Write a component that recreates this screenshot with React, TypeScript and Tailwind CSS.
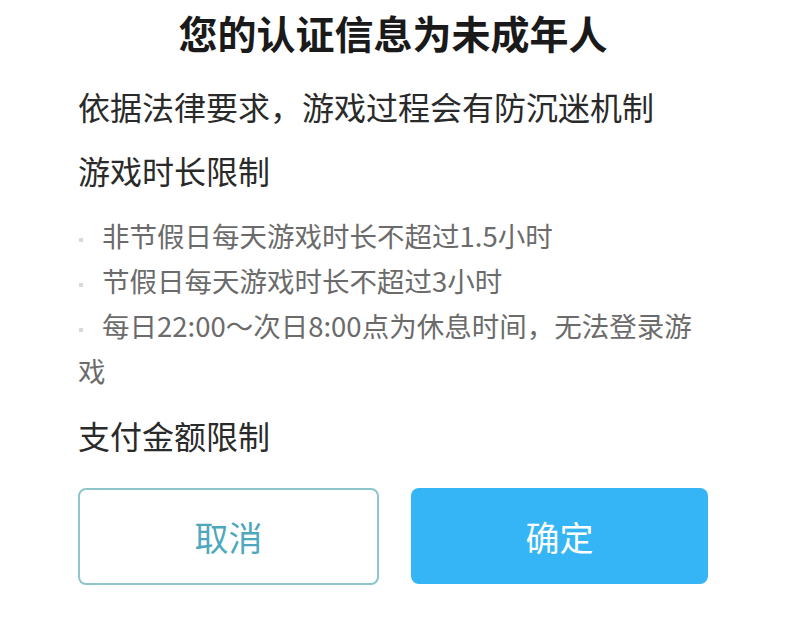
import React from "react";

const rules = [
  "非节假日每天游戏时长不超过1.5小时",
  "节假日每天游戏时长不超过3小时",
  "每日22:00～次日8:00点为休息时间，无法登录游戏",
];

export default function App() {
  return (
    <div
      className="w-[786px] h-[621px] bg-white px-[78px] pt-[10px]"
      style={{ fontFamily: '"Noto Sans CJK SC", "Noto Sans", sans-serif' }}
    >
      {/* title */}
      <h1 className="text-center text-[39px] leading-[44px] font-bold text-[#1a1a1a]">
        您的认证信息为未成年人
      </h1>

      <p className="mt-[32px] text-[32px] leading-[40px] text-[#2a2a2a]">
        依据法律要求，游戏过程会有防沉迷机制
      </p>

      <h2 className="mt-[24px] text-[32px] leading-[40px] text-[#2a2a2a]">游戏时长限制</h2>

      {/* rule list, bullet sits inline so the wrap goes back to the left edge */}
      <div className="mt-[23px] text-[27.5px] leading-[45px] text-[#6b6b6b]">
        {rules.map((r) => (
          <p key={r}>
            <span className="inline-block w-[4px] h-[4px] bg-[#d9d9d9] align-middle ml-[1px] mr-[19px]" />
            {r}
          </p>
        ))}
      </div>

      <h2 className="mt-[22px] text-[32px] leading-[40px] text-[#2a2a2a]">支付金额限制</h2>

      {/* actions */}
      <div className="mt-[33px] flex gap-[32px]">
        <button className="flex-1 h-[97px] rounded-[8px] border-2 border-[#8cc6cb] bg-white text-[34px] text-[#4ea8bd]">
          取消
        </button>
        <button className="flex-1 h-[96px] rounded-[8px] bg-[#35b5f6] text-[34px] text-white">
          确定
        </button>
      </div>
    </div>
  );
}
